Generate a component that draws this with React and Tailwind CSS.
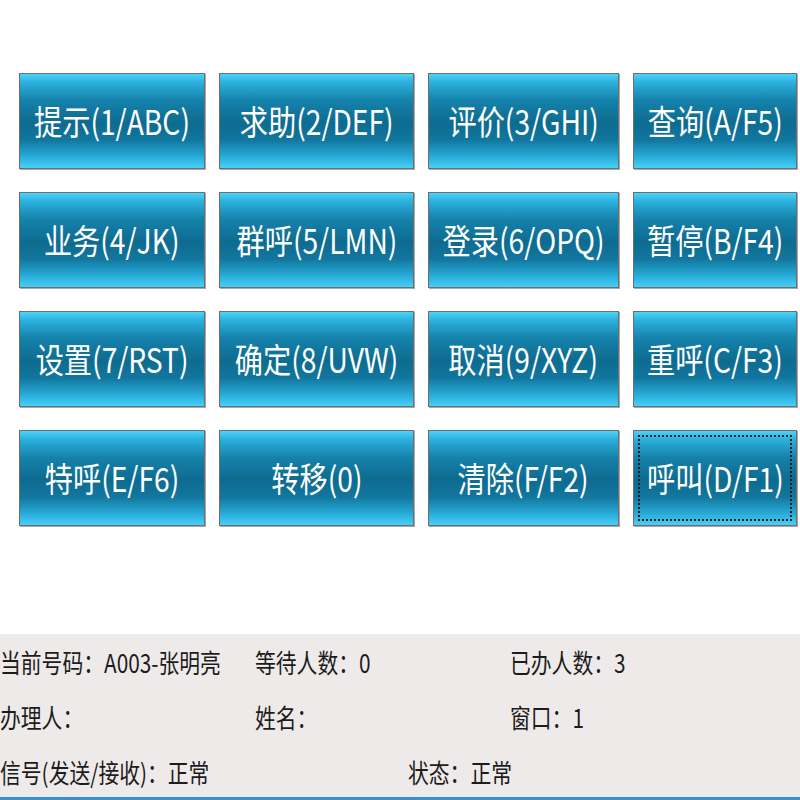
const KEYS = [
  '提示(1/ABC)', '求助(2/DEF)', '评价(3/GHI)', '查询(A/F5)',
  '业务(4/JK)', '群呼(5/LMN)', '登录(6/OPQ)', '暂停(B/F4)',
  '设置(7/RST)', '确定(8/UVW)', '取消(9/XYZ)', '重呼(C/F3)',
  '特呼(E/F6)', '转移(0)', '清除(F/F2)', '呼叫(D/F1)',
];

const FONT = "font-['Microsoft_YaHei','Noto_Sans_CJK_SC',sans-serif]";

function KeyButton({ label, focused }) {
  return (
    <button
      type="button"
      className="relative flex items-center justify-center h-[96px] border border-[#6e6e6e] shadow-[1px_1px_0_#a8a8a8] bg-[linear-gradient(180deg,#4ad4fa_0%,#2cb0dd_9%,#1582ab_28%,#0e6b90_52%,#11769e_70%,#28abd8_88%,#46d0f8_100%)]"
    >
      <span className={`inline-block scale-x-[0.83] whitespace-nowrap text-[34px] leading-none text-white ${FONT}`}>
        {label}
      </span>
      {focused && (
        <span className="absolute inset-[4px] border-2 border-dotted border-[#1b1b1b]" />
      )}
    </button>
  );
}

function Field({ children }) {
  return (
    <div className="flex items-center h-[55px] overflow-visible">
      <span className={`inline-block origin-left scale-x-[0.8] whitespace-nowrap text-[26px] leading-none text-[#1c1c1c] ${FONT}`}>
        {children}
      </span>
    </div>
  );
}

export default function App() {
  return (
    <div className="w-[800px] h-[800px] bg-white flex flex-col overflow-hidden">
      <div className="pt-[73px] pl-[19px]">
        <div className="grid grid-cols-[186px_195px_191px_164px] gap-x-[14px] gap-y-[23px]">
          {KEYS.map((k, i) => (
            <KeyButton key={k} label={k} focused={i === KEYS.length - 1} />
          ))}
        </div>
      </div>

      <div className="flex-1" />

      <div className="h-[166px] bg-[#efeaea] border-b-[3px] border-[#3a8fd0]">
        <div className="grid grid-cols-[255px_255px_1fr]">
          <Field>当前号码：A003-张明亮</Field>
          <Field>等待人数：0</Field>
          <Field>已办人数：3</Field>
          <Field>办理人：</Field>
          <Field>姓名：</Field>
          <Field>窗口：1</Field>
        </div>
        <div className="grid grid-cols-[408px_1fr]">
          <Field>信号(发送/接收)：正常</Field>
          <Field>状态：正常</Field>
        </div>
      </div>
    </div>
  );
}
